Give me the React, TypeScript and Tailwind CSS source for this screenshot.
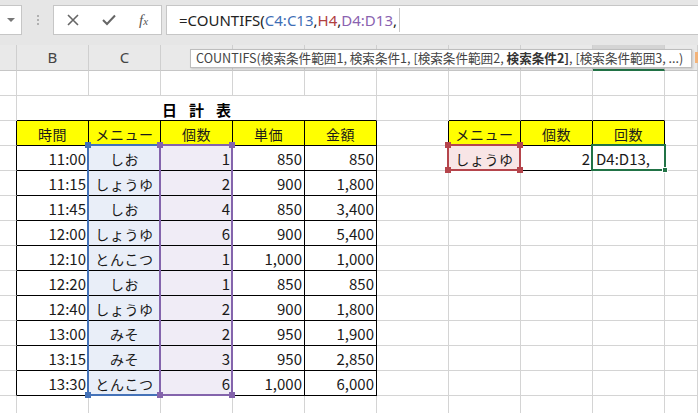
import React from "react";

const JP = '"Noto Sans CJK JP", "Noto Sans", sans-serif';
const UI = '"Noto Sans", "Noto Sans CJK JP", sans-serif';

type Cell = { t?: string; a?: "l" | "c" | "r"; bg?: string; jp?: boolean };

const data: string[][] = [
  ["11:00", "しお", "1", "850", "850"],
  ["11:15", "しょうゆ", "2", "900", "1,800"],
  ["11:45", "しお", "4", "850", "3,400"],
  ["12:00", "しょうゆ", "6", "900", "5,400"],
  ["12:10", "とんこつ", "1", "1,000", "1,000"],
  ["12:20", "しお", "1", "850", "850"],
  ["12:40", "しょうゆ", "2", "900", "1,800"],
  ["13:00", "みそ", "2", "950", "1,900"],
  ["13:15", "みそ", "3", "950", "2,850"],
  ["13:30", "とんこつ", "6", "1,000", "6,000"],
];

const inTable = (r: number, c: number) =>
  (r >= 3 && r <= 13 && c >= 1 && c <= 5) || (r >= 3 && r <= 4 && c >= 7 && c <= 9);

function getCell(r: number, c: number): Cell {
  if (r === 3) {
    const h: Record<number, string> = { 1: "時間", 2: "メニュー", 3: "個数", 4: "単価", 5: "金額", 7: "メニュー", 8: "個数", 9: "回数" };
    if (h[c]) return { t: h[c], a: "c", bg: "y", jp: true };
  }
  if (r >= 4 && r <= 13) {
    const d = data[r - 4];
    if (c === 1) return { t: d[0], a: "r" };
    if (c === 2) return { t: d[1], a: "c", bg: "b", jp: true };
    if (c === 3) return { t: d[2], a: "r", bg: "p" };
    if (c === 4) return { t: d[3], a: "r" };
    if (c === 5) return { t: d[4], a: "r" };
  }
  if (r === 4) {
    if (c === 7) return { t: "しょうゆ", a: "c", bg: "r", jp: true };
    if (c === 8) return { t: "2", a: "r" };
    if (c === 9) return { t: "D4:D13,", a: "l" };
  }
  return {};
}

function GridCell({ r, c }: { r: number; c: number }) {
  const cell = getCell(r, c);
  const blackR = inTable(r, c) || inTable(r, c + 1);
  const blackB = inTable(r, c) || inTable(r + 1, c);
  const width = c === 0 ? "w-[17px]" : c === 10 ? "flex-1" : "w-[72px]";
  const bg =
    cell.bg === "y"
      ? "bg-[#ffff00]"
      : cell.bg === "b"
      ? "bg-[#e9eef8]"
      : cell.bg === "p"
      ? "bg-[#f0ecf6]"
      : cell.bg === "r"
      ? "bg-[#f8e5e6]"
      : "bg-white";
  const align =
    cell.a === "r" ? "justify-end pr-[2px]" : cell.a === "c" ? "justify-center" : "justify-start pl-[3px]";
  return (
    <div
      className={`${width} shrink-0 h-full flex items-center border-r border-b ${
        blackR ? "border-r-black" : "border-r-[#d4d4d4]"
      } ${blackB ? "border-b-black" : "border-b-[#d4d4d4]"} ${bg} ${align} overflow-hidden whitespace-nowrap`}
    >
      {cell.t && (
        <span
          className={`${cell.jp ? "text-[14px] tracking-[0.6px]" : "text-[15px]"} text-[#1a1a1a] leading-none pt-[1px]`}
          style={{ fontFamily: JP }}
        >
          {cell.t}
        </span>
      )}
    </div>
  );
}

function Row({ r, h }: { r: number; h: string }) {
  return (
    <div className={`flex ${h}`}>
      {Array.from({ length: 11 }, (_, c) => (
        <GridCell key={c} r={r} c={c} />
      ))}
    </div>
  );
}

function TitleRow() {
  const cols = [6, 7, 8, 9, 10];
  return (
    <div className="flex h-[25px]">
      <div className="w-[17px] shrink-0 h-full border-r border-b border-r-[#d4d4d4] border-b-[#d4d4d4] bg-white" />
      <div className="w-[360px] shrink-0 h-full border-r border-b border-r-[#d4d4d4] border-b-black bg-white flex items-center justify-center">
        <div className="flex gap-[12px] text-[15px] font-bold text-black leading-none pt-[2px]" style={{ fontFamily: JP }}>
          <span>日</span>
          <span>計</span>
          <span>表</span>
        </div>
      </div>
      {cols.map((c) => (
        <div
          key={c}
          className={`${c === 10 ? "flex-1" : "w-[72px]"} shrink-0 h-full border-r border-b border-r-[#d4d4d4] ${
            c >= 7 && c <= 9 ? "border-b-black" : "border-b-[#d4d4d4]"
          } bg-white`}
        />
      ))}
    </div>
  );
}

function Sel({ x1, y1, x2, y2, color, fillHandles }: { x1: number; y1: number; x2: number; y2: number; color: string; fillHandles: boolean[] }) {
  const corners = [
    [x1, y1],
    [x2, y1],
    [x1, y2],
    [x2, y2],
  ];
  return (
    <>
      <div
        className="absolute border-2 pointer-events-none"
        style={{ left: x1 - 1, top: y1 - 1, width: x2 - x1 + 2, height: y2 - y1 + 2, borderColor: color }}
      />
      {corners.map(([x, y], i) =>
        fillHandles[i] ? (
          <div key={i} className="absolute w-[6px] h-[6px]" style={{ left: x - 3, top: y - 3, backgroundColor: color }} />
        ) : null
      )}
    </>
  );
}

export default function App() {
  // letters D–J sit beneath the function tooltip, so only B and C show
  const letters = ["", "B", "C", "", "", "", "", "", "", "", ""];
  return (
    <div className="relative w-[698px] h-[413px] overflow-hidden bg-white select-none" style={{ fontFamily: UI }}>
      {/* formula bar */}
      <div className="h-[45px] bg-[#e6e6e6] flex items-start pt-[5px]">
        <div className="w-[22px] h-[30px] bg-white border border-[#c6c6c6] border-l-0 flex items-center justify-center shrink-0">
          <div className="w-0 h-0 border-l-[4px] border-r-[4px] border-t-[4px] border-l-transparent border-r-transparent border-t-[#777] ml-[1px]" />
        </div>
        <div className="w-[31px] h-[30px] flex flex-col items-center justify-center gap-[2px] shrink-0">
          <div className="w-[2px] h-[2px] bg-[#b0b0b0]" />
          <div className="w-[2px] h-[2px] bg-[#b0b0b0]" />
          <div className="w-[2px] h-[2px] bg-[#b0b0b0]" />
        </div>
        <div className="w-[109px] h-[30px] bg-white border border-[#c6c6c6] flex items-center shrink-0">
          <div className="w-[38px] flex justify-center">
            <svg width="12" height="12" viewBox="0 0 12 12">
              <path d="M1 1 L11 11 M11 1 L1 11" stroke="#666" strokeWidth="1.6" fill="none" />
            </svg>
          </div>
          <div className="w-[34px] flex justify-center">
            <svg width="14" height="12" viewBox="0 0 14 12">
              <path d="M1 6 L5 10 L13 1.5" stroke="#666" strokeWidth="2" fill="none" />
            </svg>
          </div>
          <div className="w-[35px] flex justify-center">
            <span className="text-[#555] italic text-[15px] leading-none" style={{ fontFamily: '"Liberation Serif", serif' }}>
              f<span className="text-[11px]">x</span>
            </span>
          </div>
        </div>
        <div className="flex-1 h-[30px] ml-[4px] bg-white border border-[#c6c6c6] border-r-0 flex items-center pl-[12px]">
          <span className="text-[15px] leading-none text-[#222]" style={{ fontFamily: UI }}>
            =COUNTIFS(
            <span className="text-[#3e6db5]">C4:C13</span>,<span className="text-[#b0403f]">H4</span>,
            <span className="text-[#8a62b0]">D4:D13</span>,
          </span>
          <div className="w-px h-[24px] bg-[#c8c8c8] ml-[2px]" />
        </div>
      </div>

      {/* column headers */}
      <div className="flex h-[26px] bg-[#e9e9e9]">
        {letters.map((l, c) => (
          <div
            key={c}
            className={`${c === 0 ? "w-[17px]" : c === 10 ? "flex-1" : "w-[72px]"} shrink-0 h-full flex items-center justify-center border-r border-r-[#cfcfcf] ${
              c === 9 ? "bg-[#d4d4d4] border-b-2 border-b-[#217346]" : "border-b border-b-[#c6c6c6]"
            }`}
          >
            {l && (
              <span className="text-[15px] text-[#444] leading-none" style={{ fontFamily: UI }}>
                {l}
              </span>
            )}
          </div>
        ))}
      </div>

      {/* rows */}
      <Row r={1} h="h-[25px]" />
      <TitleRow />
      {Array.from({ length: 11 }, (_, i) => (
        <Row key={i} r={i + 3} h="h-[25px]" />
      ))}
      <Row r={14} h="h-[25px]" />

      {/* reference selections */}
      <Sel x1={88} y1={145} x2={160} y2={395} color="#4472b8" fillHandles={[true, false, true, false]} />
      <Sel x1={160} y1={145} x2={232} y2={395} color="#8464ac" fillHandles={[true, true, true, true]} />
      <Sel x1={448} y1={145} x2={520} y2={170} color="#b5454c" fillHandles={[true, true, true, true]} />

      {/* active cell */}
      <div className="absolute border-2 border-[#217346]" style={{ left: 591, top: 144, width: 75, height: 27 }} />
      <div className="absolute w-[6px] h-[6px] bg-[#217346] border border-white" style={{ left: 662, top: 167 }} />

      {/* tooltip */}
      <div className="absolute left-[190px] top-[49px] w-[502px] h-[19px] bg-white border border-[#bdbdbd] shadow-[1px_1px_2px_rgba(0,0,0,0.15)] flex items-center pl-[5px] whitespace-nowrap overflow-hidden">
        <span className="text-[12.6px] text-[#444] leading-none" style={{ fontFamily: JP }}>
          COUNTIFS(検索条件範囲1, 検索条件1, [検索条件範囲2, <b className="font-bold text-[#333]">検索条件2]</b>, [検索条件範囲3, ...)
        </span>
      </div>
      <div className="absolute left-[695px] top-[52px] w-[3px] h-[11px] bg-[#f2b37a]" />
    </div>
  );
}
